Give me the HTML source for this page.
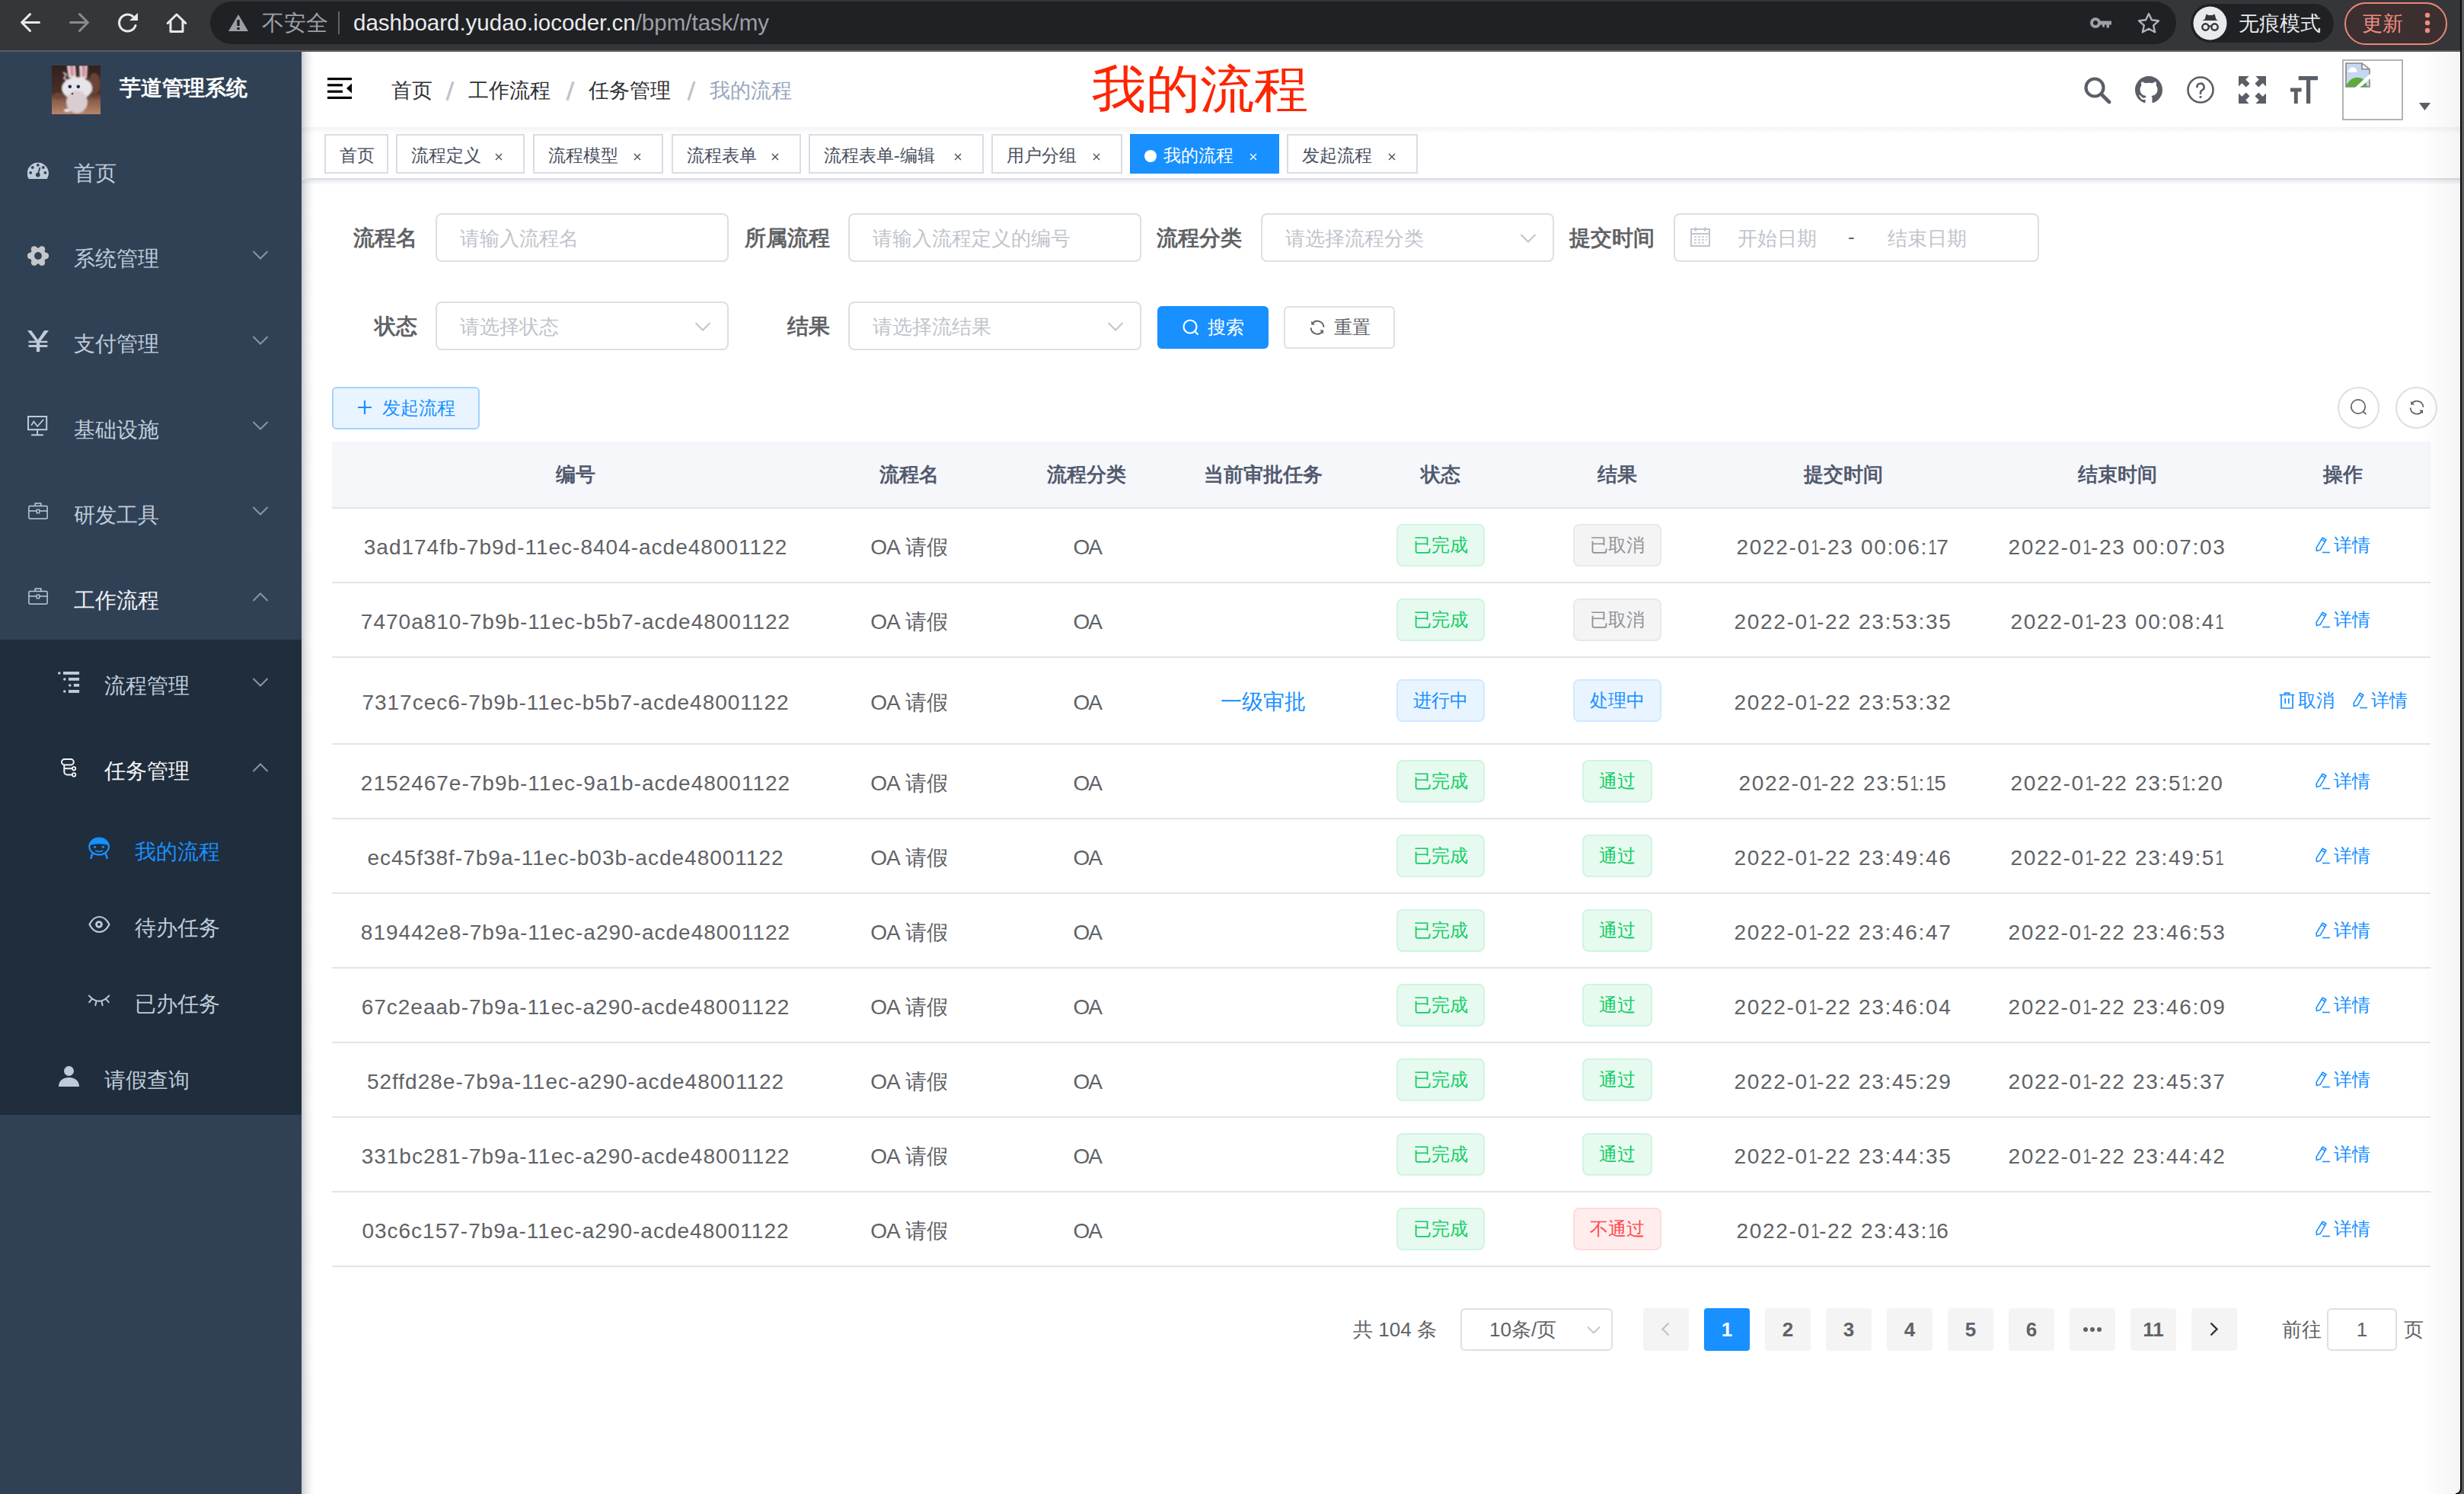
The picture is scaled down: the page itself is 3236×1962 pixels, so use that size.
<!DOCTYPE html>
<html><head><meta charset="utf-8">
<style>
*{box-sizing:border-box;margin:0;padding:0}
html,body{width:3236px;height:1962px;overflow:hidden;background:#fff}
body{font-family:"Liberation Sans",sans-serif;position:relative;color:#606266}
.a{position:absolute;white-space:nowrap}
svg{display:block}
/* chrome */
#chrome{left:0;top:0;width:3236px;height:66px;background:#35363a}
#chromeline{left:0;top:66px;width:3236px;height:2px;background:#5b5c60}
#omni{left:276px;top:2px;width:2582px;height:56px;border-radius:28px;background:#202124}
/* sidebar */
#side{left:0;top:68px;width:396px;height:1894px;background:#304156}
#subdark{left:0;top:840px;width:396px;height:624px;background:#1f2d3d}
.mi{font-size:28px;color:#bfcbd9;line-height:40px}
.mi.w{color:#f4f4f5}
.mi.act{color:#1890ff}
/* main */
#shadowL{left:396px;top:68px;width:17px;height:1894px;background:linear-gradient(to right,rgba(0,21,41,.22),rgba(0,21,41,.1) 35%,rgba(0,21,41,.03) 70%,rgba(0,21,41,0))}
.bc{font-size:28px;line-height:40px;color:#303133}
.sep{color:#c0c4cc;font-weight:bold;margin:0 19px 0 20px;font-size:31px}
.tag{top:176px;height:52px;border:2px solid #d8dce5;background:#fff;color:#495060;font-size:23px;line-height:52px;padding:0 0 0 18px}
.tag .x{position:absolute}
.lbl{font-size:28px;font-weight:bold;color:#606266;line-height:44px;text-align:right}
.inp{height:64px;border:2px solid #dcdfe6;border-radius:8px;background:#fff}
.ph{font-size:26px;color:#c0c4cc;line-height:44px}
.th{font-size:26px;font-weight:bold;color:#515a6e;line-height:40px;text-align:center}
.td{font-size:28px;color:#606266;line-height:40px;text-align:center;letter-spacing:1px}
.dt{letter-spacing:1.67px}.dt .o{font-weight:normal;display:inline-block;transform:scaleX(0.72);margin:0 -3.8px 0 -2.2px}
.rowline{left:436px;width:2756px;height:2px;background:#dfe6ec}
.stag{height:56px;border:2px solid;border-radius:8px;font-size:24px;line-height:52px;text-align:center}
.ok{background:#e7faf0;border-color:#d0f5e0;color:#13ce66}
.info{background:#f4f4f5;border-color:#e9e9eb;color:#909399}
.pri{background:#e8f4ff;border-color:#d1e9ff;color:#1890ff}
.dan{background:#ffeded;border-color:#ffdbdb;color:#ff4949}
.link{color:#1890ff;font-size:24px;line-height:40px}
.pg{top:1718px;width:60px;height:56px;background:#f4f4f5;border-radius:4px;font-size:26px;font-weight:bold;color:#606266;text-align:center;line-height:56px}
</style></head><body>

<!-- ============ CHROME BAR ============ -->
<div class="a" id="chrome"></div>
<div class="a" id="chromeline"></div>
<div class="a" id="omni"></div>
<svg class="a" style="left:24px;top:14px" width="32" height="32" viewBox="0 0 32 32"><path d="M27.5 15.5H5M15.5 4.6L4.6 15.5l10.9 11" fill="none" stroke="#e8eaed" stroke-width="3" stroke-linecap="round" stroke-linejoin="round"/></svg>
<svg class="a" style="left:88px;top:14px" width="32" height="32" viewBox="0 0 32 32"><path d="M4.5 15.5h22.5M16.5 4.6l10.9 10.9-10.9 11" fill="none" stroke="#8a8b8e" stroke-width="3" stroke-linecap="round" stroke-linejoin="round"/></svg>
<svg class="a" style="left:152px;top:14px" width="32" height="32" viewBox="0 0 32 32"><path d="M26 19.5A11 11 0 1 1 22.5 7.5" fill="none" stroke="#e8eaed" stroke-width="3" stroke-linecap="round"/><path d="M18 13L29 13 29 3z" fill="#e8eaed"/></svg>
<svg class="a" style="left:216px;top:14px" width="32" height="32" viewBox="0 0 32 32"><path d="M4.2 16.5L16 5l11.8 11.5M8 13.5v14h16v-14" fill="none" stroke="#e8eaed" stroke-width="3" stroke-linecap="round" stroke-linejoin="round"/></svg>
<svg class="a" style="left:299px;top:18px" width="28" height="24" viewBox="0 0 28 24"><path d="M14 1L27 23H1z" fill="#9aa0a6"/><rect x="12.3" y="8" width="3.4" height="8" fill="#202124"/><rect x="12.3" y="18" width="3.4" height="3" fill="#202124"/></svg>
<div class="a" style="left:344px;top:10px;font-size:29px;line-height:40px;color:#9aa0a6">不安全</div>
<div class="a" style="left:444px;top:15px;width:2px;height:30px;background:#5f6368"></div>
<div class="a" style="left:464px;top:10px;font-size:29.5px;line-height:40px;color:#e8eaed">dashboard.yudao.iocoder.cn<span style="color:#9aa0a6">/bpm/task/my</span></div>
<svg class="a" style="left:2744px;top:20px" width="30" height="20" viewBox="0 0 30 20"><circle cx="8" cy="10" r="7" fill="#9aa0a6"/><circle cx="8" cy="10" r="3" fill="#202124"/><path d="M13 7.5h16v5h-3v4h-3.5v-4h-2.5v3h-3v-3H13z" fill="#9aa0a6"/></svg>
<svg class="a" style="left:2806px;top:15px" width="32" height="32" viewBox="0 0 32 32"><path d="M16 3l3.9 8.3 9 1-6.7 6.1 1.9 8.9L16 22.7l-8.1 4.6 1.9-8.9-6.7-6.1 9-1z" fill="none" stroke="#b0b4b9" stroke-width="2.4" stroke-linejoin="round"/></svg>
<div class="a" style="left:2876px;top:4px;width:190px;height:53px;border-radius:27px;background:#202124;border:1px solid #3a3b3e"></div>
<svg class="a" style="left:2880px;top:8px" width="45" height="45" viewBox="0 0 45 45"><circle cx="22.5" cy="22.5" r="22" fill="#e8eaed"/><path d="M12 19h21l-2.5-1.5-2-7-3 1.5h-5l-3-1.5-2 7z" fill="#35363a"/><circle cx="16.5" cy="27.5" r="4.2" fill="none" stroke="#35363a" stroke-width="2.4"/><circle cx="28.5" cy="27.5" r="4.2" fill="none" stroke="#35363a" stroke-width="2.4"/><path d="M20.5 27q2-1.5 4 0" fill="none" stroke="#35363a" stroke-width="2"/></svg>
<div class="a" style="left:2940px;top:11px;font-size:27px;line-height:40px;color:#e8eaed">无痕模式</div>
<div class="a" style="left:3079px;top:3px;width:135px;height:56px;border-radius:28px;border:2.5px solid #ee8577;background:#3b2f30"></div>
<div class="a" style="left:3102px;top:11px;font-size:27px;line-height:40px;color:#f28b82">更新</div>
<svg class="a" style="left:3181px;top:15px" width="14" height="32" viewBox="0 0 14 32"><circle cx="7" cy="5" r="3.2" fill="#f28b82"/><circle cx="7" cy="15" r="3.2" fill="#f28b82"/><circle cx="7" cy="25" r="3.2" fill="#f28b82"/></svg>

<!-- ============ SIDEBAR ============ -->
<div class="a" id="side"></div>
<div class="a" id="subdark"></div>
<!-- logo -->
<svg class="a" style="left:68px;top:86px" width="64" height="64" viewBox="0 0 64 64">
<defs><linearGradient id="lg" x1="0" y1="0" x2="0" y2="1"><stop offset="0" stop-color="#33201d"/><stop offset="0.55" stop-color="#4a2e27"/><stop offset="0.72" stop-color="#8a5d4b"/><stop offset="1" stop-color="#b98568"/></linearGradient>
<filter id="bl"><feGaussianBlur stdDeviation="0.9"/></filter></defs>
<rect width="64" height="64" fill="url(#lg)"/>
<g filter="url(#bl)">
<ellipse cx="56" cy="24" rx="8" ry="14" fill="#6a4535"/>
<ellipse cx="8" cy="40" rx="5" ry="4" fill="#6b4a40"/>
<path d="M20 0h11l1 16h-10z" fill="#e9e4e6"/><path d="M23 0h6l.5 14h-5z" fill="#d88d9d"/>
<path d="M36 0h11l-1 17h-9z" fill="#e9e4e6"/><path d="M39 0h6l-.5 15h-5z" fill="#d88d9d"/>
<path d="M15 9l4 3-3 5 4 2-3 5" fill="none" stroke="#e8e8ea" stroke-width="1.6"/>
<ellipse cx="33" cy="30" rx="20" ry="15" fill="#e6e6ea"/>
<ellipse cx="33" cy="48" rx="14" ry="15" fill="#d9cdd2"/>
<ellipse cx="20" cy="59" rx="4" ry="2" fill="#eeeef0"/>
</g>
<circle cx="23.8" cy="27.8" r="2.3" fill="#22304a"/><circle cx="34.8" cy="27.8" r="2.3" fill="#22304a"/>
<ellipse cx="27" cy="37" rx="1.3" ry="1.6" fill="#7a4638"/>
</svg>
<div class="a" style="left:157px;top:96px;font-size:28px;line-height:40px;color:#fff;font-weight:bold">芋道管理系统</div>
<!-- menu text -->
<div class="a mi" style="left:97px;top:208px">首页</div>
<div class="a mi" style="left:97px;top:320px">系统管理</div>
<div class="a mi" style="left:97px;top:432px">支付管理</div>
<div class="a mi" style="left:97px;top:545px">基础设施</div>
<div class="a mi" style="left:97px;top:657px">研发工具</div>
<div class="a mi w" style="left:97px;top:769px">工作流程</div>
<div class="a mi" style="left:137px;top:881px">流程管理</div>
<div class="a mi w" style="left:137px;top:993px">任务管理</div>
<div class="a mi act" style="left:177px;top:1099px">我的流程</div>
<div class="a mi" style="left:177px;top:1199px">待办任务</div>
<div class="a mi" style="left:177px;top:1299px">已办任务</div>
<div class="a mi" style="left:137px;top:1399px">请假查询</div>
<!-- arrows -->
<svg class="a" style="left:331px;top:328px" width="22" height="14" viewBox="0 0 22 14"><path d="M1.5 2l9.5 9.5L20.5 2" fill="none" stroke="#909399" stroke-width="2"/></svg>
<svg class="a" style="left:331px;top:440px" width="22" height="14" viewBox="0 0 22 14"><path d="M1.5 2l9.5 9.5L20.5 2" fill="none" stroke="#909399" stroke-width="2"/></svg>
<svg class="a" style="left:331px;top:552px" width="22" height="14" viewBox="0 0 22 14"><path d="M1.5 2l9.5 9.5L20.5 2" fill="none" stroke="#909399" stroke-width="2"/></svg>
<svg class="a" style="left:331px;top:664px" width="22" height="14" viewBox="0 0 22 14"><path d="M1.5 2l9.5 9.5L20.5 2" fill="none" stroke="#909399" stroke-width="2"/></svg>
<svg class="a" style="left:331px;top:777px" width="22" height="14" viewBox="0 0 22 14"><path d="M1.5 12l9.5-9.5L20.5 12" fill="none" stroke="#909399" stroke-width="2"/></svg>
<svg class="a" style="left:331px;top:889px" width="22" height="14" viewBox="0 0 22 14"><path d="M1.5 2l9.5 9.5L20.5 2" fill="none" stroke="#909399" stroke-width="2"/></svg>
<svg class="a" style="left:331px;top:1001px" width="22" height="14" viewBox="0 0 22 14"><path d="M1.5 12l9.5-9.5L20.5 12" fill="none" stroke="#909399" stroke-width="2"/></svg>
<!-- icons -->
<svg class="a" style="left:36px;top:212px" width="28" height="25" viewBox="0 0 28 25"><path d="M1.8 23.1A14.1 14.1 0 1 1 25.8 23.1z" fill="#bfcbd9"/><g fill="#304156"><circle cx="4.2" cy="14.8" r="1.9"/><circle cx="6.8" cy="7.9" r="1.9"/><circle cx="13.8" cy="4.8" r="1.9"/><circle cx="20.8" cy="7.9" r="1.9"/><circle cx="23.4" cy="14.8" r="1.9"/><circle cx="13.8" cy="17.6" r="2.9"/></g><path d="M13.8 17L16.3 8.6" stroke="#304156" stroke-width="1.9" stroke-linecap="round"/></svg>
<svg class="a" style="left:36px;top:322px" width="28" height="28" viewBox="0 0 28 28"><g fill="#c5c7cb"><circle cx="14" cy="14" r="10.6"/><circle cx="24.00" cy="14.00" r="4.2"/><circle cx="19.00" cy="22.66" r="4.2"/><circle cx="9.00" cy="22.66" r="4.2"/><circle cx="4.00" cy="14.00" r="4.2"/><circle cx="9.00" cy="5.34" r="4.2"/><circle cx="19.00" cy="5.34" r="4.2"/></g><circle cx="14" cy="14" r="4.9" fill="#304156"/></svg>
<svg class="a" style="left:28px;top:425px" width="44" height="45" viewBox="0 0 44 45"><path d="M8 9H13L21.9 21.2L30.1 9H36L24.2 24.5V37H19.9V24.5Z" fill="#bfcbd9"/><rect x="9.5" y="22.7" width="24.8" height="2.4" fill="#bfcbd9"/><rect x="9.5" y="28" width="24.8" height="2.9" fill="#bfcbd9"/></svg>
<svg class="a" style="left:28px;top:538px" width="44" height="42" viewBox="0 0 44 42"><rect x="9" y="9" width="24.2" height="17.2" fill="none" stroke="#bfcbd9" stroke-width="2"/><path d="M21.1 26.2V33.3M13.1 33.3H29" fill="none" stroke="#bfcbd9" stroke-width="1.9"/><path d="M13.5 20L16.4 15.6L21.2 22L28.7 13.4" fill="none" stroke="#bfcbd9" stroke-width="1.7" stroke-linecap="round"/></svg>
<svg class="a" style="left:37px;top:660px" width="26" height="23" viewBox="0 0 26 23"><rect x="0.9" y="4.6" width="24.2" height="16.6" rx="1.5" fill="none" stroke="#bfcbd9" stroke-width="1.5"/><path d="M9.2 4.6V1h7.6v3.6M0.9 11h24.2" fill="none" stroke="#bfcbd9" stroke-width="1.5"/><rect x="11.3" y="9.2" width="3.4" height="4.6" fill="#304156" stroke="#bfcbd9" stroke-width="1.3"/></svg>
<svg class="a" style="left:37px;top:772px" width="26" height="23" viewBox="0 0 26 23"><rect x="0.9" y="4.6" width="24.2" height="16.6" rx="1.5" fill="none" stroke="#bfcbd9" stroke-width="1.5"/><path d="M9.2 4.6V1h7.6v3.6M0.9 11h24.2" fill="none" stroke="#bfcbd9" stroke-width="1.5"/><rect x="11.3" y="9.2" width="3.4" height="4.6" fill="#304156" stroke="#bfcbd9" stroke-width="1.3"/></svg>
<svg class="a" style="left:76px;top:882px" width="29" height="29" viewBox="0 0 29 29"><g fill="#bfcbd9"><circle cx="1.8" cy="2" r="1.8"/><rect x="7" y="0" width="21.1" height="3.9"/><circle cx="8.8" cy="10" r="1.8"/><rect x="14" y="8" width="14.1" height="3.8"/><circle cx="15.8" cy="18" r="1.8"/><rect x="20.9" y="16" width="7.2" height="3.8"/><circle cx="8.8" cy="26" r="1.8"/><rect x="14" y="24" width="14.1" height="3.9"/></g></svg>
<svg class="a" style="left:78px;top:994px" width="24" height="27" viewBox="0 0 24 27"><rect x="3" y="3" width="15.8" height="7.4" rx="3.7" fill="none" stroke="#f4f4f5" stroke-width="2"/><path d="M6.3 10.5V19.5a4 4 0 0 0 4 4H16.9M6.3 15.3H16.9" fill="none" stroke="#f4f4f5" stroke-width="2"/><circle cx="19.1" cy="15.3" r="2.2" fill="#1f2d3d" stroke="#f4f4f5" stroke-width="1.8"/><circle cx="19.1" cy="23.4" r="2.2" fill="#1f2d3d" stroke="#f4f4f5" stroke-width="1.8"/></svg>
<svg class="a" style="left:110px;top:1095px" width="40" height="40" viewBox="0 0 40 40"><ellipse cx="20.1" cy="16.8" rx="12.8" ry="10.6" fill="none" stroke="#1890ff" stroke-width="2.3"/><path d="M7.3 15A12.8 10.6 0 0 1 32.9 15Q20 11.4 7.3 15z" fill="#1890ff"/><path d="M7.6 13.5Q9 6.2 20.1 6.2T32.6 13.5Q20 11 7.6 13.5z" fill="#1890ff"/><ellipse cx="14.6" cy="17.4" rx="1.7" ry="1.3" fill="#1890ff"/><ellipse cx="25.4" cy="17.4" rx="1.7" ry="1.3" fill="#1890ff"/><path d="M15.8 22.2Q20.1 24.6 24.4 22.2" fill="none" stroke="#1890ff" stroke-width="1.8" stroke-linecap="round"/><path d="M11.8 25.8Q9.8 28.5 9.4 32.8M28.3 25.8Q30.3 28.5 30.8 32.8" fill="none" stroke="#1890ff" stroke-width="2.6"/></svg>
<svg class="a" style="left:116px;top:1202px" width="29" height="24" viewBox="0 0 29 24"><path d="M1.5 12C5 5 10 2 14.5 2S24 5 27.5 12C24 19 19 22 14.5 22S5 19 1.5 12z" fill="none" stroke="#bfcbd9" stroke-width="2.2"/><circle cx="14" cy="12" r="3.4" fill="none" stroke="#bfcbd9" stroke-width="2.9"/></svg>
<svg class="a" style="left:110px;top:1295px" width="40" height="40" viewBox="0 0 40 40"><path d="M7 12.6Q19.9 27 33.2 12.6M10.4 17.4L7.2 21.2M29.4 17.4L32.7 21.2M16.3 20.6L15.3 25.2M23.6 20.6L24.6 25.2" fill="none" stroke="#bfcbd9" stroke-width="2" stroke-linecap="round"/></svg>
<svg class="a" style="left:76px;top:1399px" width="29" height="30" viewBox="0 0 29 30"><circle cx="14.5" cy="7.5" r="6.5" fill="#bfcbd9"/><path d="M1 28c0-8 6-12 13.5-12S28 20 28 28z" fill="#bfcbd9"/></svg>

<!-- ============ MAIN ============ -->
<div class="a" id="shadowL"></div>
<!-- navbar -->

<svg class="a" style="left:430px;top:102px" width="32" height="28" viewBox="0 0 32 28"><rect x="0" y="0" width="32" height="3.2" fill="#000"/><rect x="0" y="8.2" width="20" height="3.2" fill="#000"/><rect x="0" y="16.6" width="20" height="3.2" fill="#000"/><rect x="0" y="24.8" width="32" height="3.2" fill="#000"/><path d="M32 7.5v13l-7-6.5z" fill="#000"/></svg>
<div class="a bc" style="left:514px;top:99px;font-size:27px">首页</div><svg class="a" style="left:585px;top:106px" width="12" height="27" viewBox="0 0 12 27"><path d="M10 1.2L2 25.8" stroke="#c0c4cc" stroke-width="3.3" stroke-linecap="butt"/></svg><div class="a bc" style="left:615px;top:99px;font-size:27px">工作流程</div><svg class="a" style="left:743px;top:106px" width="12" height="27" viewBox="0 0 12 27"><path d="M10 1.2L2 25.8" stroke="#c0c4cc" stroke-width="3.3" stroke-linecap="butt"/></svg><div class="a bc" style="left:773px;top:99px;font-size:27px">任务管理</div><svg class="a" style="left:902px;top:106px" width="12" height="27" viewBox="0 0 12 27"><path d="M10 1.2L2 25.8" stroke="#c0c4cc" stroke-width="3.3" stroke-linecap="butt"/></svg><div class="a bc" style="left:932px;top:99px;font-size:27px;color:#97a8be">我的流程</div>
<div class="a" style="left:1434px;top:67px;font-size:71px;line-height:100px;color:#fe2500;transform:scaleY(0.94);transform-origin:0 50%">我的流程</div>
<!-- right icons -->
<svg class="a" style="left:2736px;top:100px" width="37" height="37" viewBox="0 0 37 37"><circle cx="15" cy="15" r="11.5" fill="none" stroke="#5a5e66" stroke-width="4.2"/><path d="M23.5 23.5L34 34" stroke="#5a5e66" stroke-width="4.6" stroke-linecap="round"/></svg>
<svg class="a" style="left:2804px;top:100px" width="36" height="36" viewBox="0 0 16 16"><path fill="#5a5e66" d="M8 0C3.58 0 0 3.58 0 8c0 3.54 2.29 6.53 5.47 7.59.4.07.55-.17.55-.38 0-.19-.01-.82-.01-1.49-2.01.37-2.53-.49-2.69-.94-.09-.23-.48-.94-.82-1.13-.28-.15-.68-.52-.01-.53.63-.01 1.08.58 1.23.82.72 1.21 1.87.87 2.33.66.07-.52.28-.87.51-1.07-1.78-.2-3.64-.89-3.64-3.95 0-.87.31-1.59.82-2.15-.08-.2-.36-1.02.08-2.12 0 0 .67-.21 2.2.82.64-.18 1.32-.27 2-.27.68 0 1.36.09 2 .27 1.53-1.04 2.2-.82 2.2-.82.44 1.1.16 1.92.08 2.12.51.56.82 1.27.82 2.15 0 3.07-1.87 3.75-3.65 3.95.29.25.54.73.54 1.48 0 1.07-.01 1.93-.01 2.2 0 .21.15.46.55.38A8.013 8.013 0 0016 8c0-4.42-3.58-8-8-8z"/></svg>
<svg class="a" style="left:2872px;top:100px" width="36" height="36" viewBox="0 0 36 36"><circle cx="18" cy="18" r="16.5" fill="none" stroke="#5a5e66" stroke-width="2.6"/><path d="M13.4 14.2a4.6 4.6 0 1 1 6.7 4.1c-1.4.8-2.1 1.5-2.1 3v1.4" fill="none" stroke="#5a5e66" stroke-width="2.6" stroke-linecap="round"/><circle cx="18" cy="27.3" r="1.6" fill="#5a5e66"/></svg>
<svg class="a" style="left:2940px;top:100px" width="36" height="36" viewBox="0 0 37 37"><path fill="#5a5e66" d="M0 0h14l-4.5 4.5 5.5 5.5-5 5-5.5-5.5L0 14zM37 0v14l-4.5-4.5-5.5 5.5-5-5 5.5-5.5L23 0zM0 37V23l4.5 4.5 5.5-5.5 5 5-5.5 5.5L14 37zM37 37H23l4.5-4.5-5.5-5.5 5-5 5.5 5.5L37 23z"/></svg>
<svg class="a" style="left:3008px;top:100px" width="36" height="36" viewBox="0 0 37 37"><path fill="#5a5e66" d="M11 0h26v5.5H27V37h-5.5V5.5H11zM0 16h15v5H10v16H5V21H0z"/></svg>
<div class="a" style="left:3076px;top:78px;width:80px;height:80px;border:2px solid #b4b4b4;background:#fff"></div>
<svg class="a" style="left:3080px;top:82px" width="33" height="33" viewBox="0 0 33 33"><path d="M1 1H22L32 9V32H1z" fill="#c5d7f2"/><path d="M22 1L32 9H22z" fill="#fff"/><path d="M3.2 12.8C4.5 9 6.5 6.2 10 6.2S14.8 9 15.8 12.8z" fill="#fff"/><path d="M1 32C3 26 8 20 15.5 19.8S27 24 29 32z" fill="#5bab3d"/><path d="M32 15.6L13.4 32.6H20.2L32 22z" fill="#fff"/><path d="M32 15.6V9L22 1H1V32H13.4M20.2 32H32V22" fill="none" stroke="#868686" stroke-width="1.6"/><path d="M22 1V8.8H32" fill="none" stroke="#868686" stroke-width="1.6"/></svg>
<svg class="a" style="left:3177px;top:135px" width="15" height="10" viewBox="0 0 15 10"><path d="M0 0h15L7.5 10z" fill="#5a5e66"/></svg>
<!-- tags view -->
<div class="a" style="left:396px;top:167px;width:2840px;height:9px;background:linear-gradient(rgba(0,21,41,.05),rgba(0,21,41,0))"></div>
<div class="a" style="left:396px;top:234px;width:2840px;height:2px;background:#d8dce5"></div>
<div class="a" style="left:396px;top:236px;width:2840px;height:7px;background:linear-gradient(rgba(0,21,41,.09),rgba(0,21,41,0))"></div>
<div class="a tag" style="left:426px;width:84px">首页</div>
<div class="a tag" style="left:520px;width:169px">流程定义<svg class="x" style="left:128px;top:23px" width="10" height="10" viewBox="0 0 10 10"><path d="M1 1l8 8M9 1l-8 8" stroke="currentColor" stroke-width="1.4"/></svg></div>
<div class="a tag" style="left:700px;width:171px">流程模型<svg class="x" style="left:130px;top:23px" width="10" height="10" viewBox="0 0 10 10"><path d="M1 1l8 8M9 1l-8 8" stroke="currentColor" stroke-width="1.4"/></svg></div>
<div class="a tag" style="left:882px;width:170px">流程表单<svg class="x" style="left:129px;top:23px" width="10" height="10" viewBox="0 0 10 10"><path d="M1 1l8 8M9 1l-8 8" stroke="currentColor" stroke-width="1.4"/></svg></div>
<div class="a tag" style="left:1062px;width:230px">流程表单-编辑<svg class="x" style="left:189px;top:23px" width="10" height="10" viewBox="0 0 10 10"><path d="M1 1l8 8M9 1l-8 8" stroke="currentColor" stroke-width="1.4"/></svg></div>
<div class="a tag" style="left:1302px;width:172px">用户分组<svg class="x" style="left:131px;top:23px" width="10" height="10" viewBox="0 0 10 10"><path d="M1 1l8 8M9 1l-8 8" stroke="currentColor" stroke-width="1.4"/></svg></div>
<div class="a tag" style="left:1484px;width:196px;background:#1890ff;border-color:#1890ff;color:#fff;padding-left:17px"><span style="display:inline-block;width:16px;height:16px;border-radius:50%;background:#fff;margin-right:9px;vertical-align:-1px"></span>我的流程<svg class="x" style="left:155px;top:23px" width="10" height="10" viewBox="0 0 10 10"><path d="M1 1l8 8M9 1l-8 8" stroke="currentColor" stroke-width="1.4"/></svg></div>
<div class="a tag" style="left:1690px;width:172px">发起流程<svg class="x" style="left:131px;top:23px" width="10" height="10" viewBox="0 0 10 10"><path d="M1 1l8 8M9 1l-8 8" stroke="currentColor" stroke-width="1.4"/></svg></div>


<!-- ============ FORM ============ -->
<div class="a lbl" style="left:436px;top:291px;width:112px">流程名</div>
<div class="a inp" style="left:572px;top:280px;width:385px"></div>
<div class="a ph" style="left:604px;top:291px">请输入流程名</div>
<div class="a lbl" style="left:977px;top:291px;width:113px">所属流程</div>
<div class="a inp" style="left:1114px;top:280px;width:385px"></div>
<div class="a ph" style="left:1146px;top:291px">请输入流程定义的编号</div>
<div class="a lbl" style="left:1518px;top:291px;width:113px">流程分类</div>
<div class="a inp" style="left:1656px;top:280px;width:385px"></div>
<div class="a ph" style="left:1688px;top:291px">请选择流程分类</div>
<svg class="a" style="left:1996px;top:306px" width="22" height="14" viewBox="0 0 22 14"><path d="M1.5 2l9.5 9.5L20.5 2" fill="none" stroke="#c0c4cc" stroke-width="2"/></svg>
<div class="a lbl" style="left:2061px;top:291px;width:112px">提交时间</div>
<div class="a inp" style="left:2198px;top:280px;width:480px"></div>
<svg class="a" style="left:2220px;top:298px" width="26" height="26" viewBox="0 0 26 26"><rect x="1" y="3" width="24" height="22" fill="none" stroke="#c0c4cc" stroke-width="2"/><path d="M1 9h24M7 0.5v5M19 0.5v5" stroke="#c0c4cc" stroke-width="2"/><path d="M5 13h3M10 13h3M15 13h3M20 13h2M5 17h3M10 17h3M15 17h3M20 17h2M5 21h3M10 21h3M15 21h3" stroke="#c0c4cc" stroke-width="1.6"/></svg>
<div class="a ph" style="left:2282px;top:291px">开始日期</div>
<div class="a" style="left:2427px;top:291px;font-size:26px;line-height:40px;color:#606266">-</div>
<div class="a ph" style="left:2479px;top:291px">结束日期</div>

<div class="a lbl" style="left:436px;top:407px;width:112px">状态</div>
<div class="a inp" style="left:572px;top:396px;width:385px"></div>
<div class="a ph" style="left:604px;top:407px">请选择状态</div>
<svg class="a" style="left:912px;top:422px" width="22" height="14" viewBox="0 0 22 14"><path d="M1.5 2l9.5 9.5L20.5 2" fill="none" stroke="#c0c4cc" stroke-width="2"/></svg>
<div class="a lbl" style="left:977px;top:407px;width:113px">结果</div>
<div class="a inp" style="left:1114px;top:396px;width:385px"></div>
<div class="a ph" style="left:1146px;top:407px">请选择流结果</div>
<svg class="a" style="left:1454px;top:422px" width="22" height="14" viewBox="0 0 22 14"><path d="M1.5 2l9.5 9.5L20.5 2" fill="none" stroke="#c0c4cc" stroke-width="2"/></svg>
<div class="a" style="left:1520px;top:402px;width:146px;height:56px;border-radius:6px;background:#1890ff"></div>
<svg class="a" style="left:1552px;top:418px" width="24" height="24" viewBox="0 0 24 24"><circle cx="11" cy="11" r="8.5" fill="none" stroke="#fff" stroke-width="2.2"/><path d="M17.5 17.5l4 4" stroke="#fff" stroke-width="2.2"/></svg>
<div class="a" style="left:1586px;top:410px;font-size:24px;line-height:40px;color:#fff">搜索</div>
<div class="a" style="left:1686px;top:402px;width:146px;height:56px;border-radius:6px;background:#fff;border:2px solid #dcdfe6"></div>
<svg class="a" style="left:1718px;top:418px" width="24" height="24" viewBox="0 0 24 24"><path d="M20.5 11.8A8.5 8.5 0 0 0 5.6 6.6" fill="none" stroke="#606266" stroke-width="1.9"/><path d="M4.2 3.6v4.8h4.8z" fill="#606266"/><path d="M3.6 12.4A8.5 8.5 0 0 0 18.6 17.6" fill="none" stroke="#606266" stroke-width="1.9"/><path d="M20 20.4v-4.8h-4.8z" fill="#606266"/></svg>
<div class="a" style="left:1752px;top:410px;font-size:24px;line-height:40px;color:#606266">重置</div>

<div class="a" style="left:436px;top:508px;width:194px;height:56px;border-radius:6px;background:#e8f4ff;border:2px solid #a3d3ff"></div>
<svg class="a" style="left:469px;top:525px" width="20" height="20" viewBox="0 0 20 20"><path d="M10 1v18M1 10h18" stroke="#1890ff" stroke-width="2.2"/></svg>
<div class="a" style="left:502px;top:516px;font-size:24px;line-height:40px;color:#1890ff">发起流程</div>
<div class="a" style="left:3070px;top:508px;width:55px;height:55px;border-radius:50%;border:2px solid #dcdfe6;background:#fff"></div>
<svg class="a" style="left:3085px;top:522px" width="26" height="26" viewBox="0 0 26 26"><circle cx="12" cy="12" r="9.2" fill="none" stroke="#606266" stroke-width="1.7"/><path d="M18.6 18.4l3.8 3.8" stroke="#606266" stroke-width="1.7"/></svg>
<div class="a" style="left:3146px;top:508px;width:55px;height:55px;border-radius:50%;border:2px solid #dcdfe6;background:#fff"></div>
<svg class="a" style="left:3162px;top:523px" width="24" height="24" viewBox="0 0 24 24"><path d="M20.5 11.8A8.5 8.5 0 0 0 5.6 6.6" fill="none" stroke="#606266" stroke-width="1.7"/><path d="M4.2 3.6v4.8h4.8z" fill="#606266"/><path d="M3.6 12.4A8.5 8.5 0 0 0 18.6 17.6" fill="none" stroke="#606266" stroke-width="1.7"/><path d="M20 20.4v-4.8h-4.8z" fill="#606266"/></svg>

<!-- ============ TABLE ============ -->
<div class="a" style="left:436px;top:580px;width:2756px;height:86px;background:#f5f7fa"></div>
<div class="a th" style="left:436px;top:603px;width:640px">编号</div>
<div class="a th" style="left:1078px;top:603px;width:232.5px">流程名</div>
<div class="a th" style="left:1310.5px;top:603px;width:232.5px">流程分类</div>
<div class="a th" style="left:1543px;top:603px;width:232.5px">当前审批任务</div>
<div class="a th" style="left:1775.5px;top:603px;width:232.5px">状态</div>
<div class="a th" style="left:2008px;top:603px;width:232.5px">结果</div>
<div class="a th" style="left:2240.5px;top:603px;width:360.0px">提交时间</div>
<div class="a th" style="left:2600.5px;top:603px;width:360.0px">结束时间</div>
<div class="a th" style="left:2960.5px;top:603px;width:233.5px">操作</div>
<div class="a rowline" style="top:666px"></div>
<div class="a rowline" style="top:764px"></div>
<div class="a rowline" style="top:862px"></div>
<div class="a rowline" style="top:976px"></div>
<div class="a rowline" style="top:1074px"></div>
<div class="a rowline" style="top:1172px"></div>
<div class="a rowline" style="top:1270px"></div>
<div class="a rowline" style="top:1368px"></div>
<div class="a rowline" style="top:1466px"></div>
<div class="a rowline" style="top:1564px"></div>
<div class="a rowline" style="top:1662px"></div>
<div class="a td" style="left:436px;top:698.5px;width:640px">3ad174fb-7b9d-11ec-8404-acde48001122</div>
<div class="a td" style="left:1078px;top:698.5px;width:232.5px;letter-spacing:0"><span style="letter-spacing:-1px">OA</span> 请假</div>
<div class="a td" style="left:1310.5px;top:698.5px;width:232.5px;letter-spacing:-2px;text-indent:2px">OA</div>
<div class="a td" style="left:2240.5px;top:698.5px;width:360.0px"><span class="dt">2022-0<b class="o">1</b>-23 00:06:<b class="o">1</b>7</span></div>
<div class="a td" style="left:2600.5px;top:698.5px;width:360.0px"><span class="dt">2022-0<b class="o">1</b>-23 00:07:03</span></div>
<div class="a stag ok" style="left:1833.8px;top:688.0px;width:116px">已完成</div>
<div class="a stag info" style="left:2066.2px;top:688.0px;width:116px">已取消</div>
<div class="a link" style="left:2960.5px;top:696.0px;width:233.5px;text-align:center"><svg width="20" height="22" viewBox="0 0 20 22" style="display:inline-block;vertical-align:-3px;margin-right:4px"><path d="M9.3 1.2l4.6 2.6-7.8 13.5-4.6 1.3-.4-4.2z" fill="none" stroke="#1890ff" stroke-width="1.6" stroke-linejoin="round"/><path d="M8 3.6l4.6 2.6" stroke="#1890ff" stroke-width="1.6"/><path d="M9 20.5h10" stroke="#1890ff" stroke-width="1.6"/></svg>详情</div>
<div class="a td" style="left:436px;top:796.5px;width:640px">7470a810-7b9b-11ec-b5b7-acde48001122</div>
<div class="a td" style="left:1078px;top:796.5px;width:232.5px;letter-spacing:0"><span style="letter-spacing:-1px">OA</span> 请假</div>
<div class="a td" style="left:1310.5px;top:796.5px;width:232.5px;letter-spacing:-2px;text-indent:2px">OA</div>
<div class="a td" style="left:2240.5px;top:796.5px;width:360.0px"><span class="dt">2022-0<b class="o">1</b>-22 23:53:35</span></div>
<div class="a td" style="left:2600.5px;top:796.5px;width:360.0px"><span class="dt">2022-0<b class="o">1</b>-23 00:08:4<b class="o">1</b></span></div>
<div class="a stag ok" style="left:1833.8px;top:786.0px;width:116px">已完成</div>
<div class="a stag info" style="left:2066.2px;top:786.0px;width:116px">已取消</div>
<div class="a link" style="left:2960.5px;top:794.0px;width:233.5px;text-align:center"><svg width="20" height="22" viewBox="0 0 20 22" style="display:inline-block;vertical-align:-3px;margin-right:4px"><path d="M9.3 1.2l4.6 2.6-7.8 13.5-4.6 1.3-.4-4.2z" fill="none" stroke="#1890ff" stroke-width="1.6" stroke-linejoin="round"/><path d="M8 3.6l4.6 2.6" stroke="#1890ff" stroke-width="1.6"/><path d="M9 20.5h10" stroke="#1890ff" stroke-width="1.6"/></svg>详情</div>
<div class="a td" style="left:436px;top:902.5px;width:640px">7317cec6-7b9b-11ec-b5b7-acde48001122</div>
<div class="a td" style="left:1078px;top:902.5px;width:232.5px;letter-spacing:0"><span style="letter-spacing:-1px">OA</span> 请假</div>
<div class="a td" style="left:1310.5px;top:902.5px;width:232.5px;letter-spacing:-2px;text-indent:2px">OA</div>
<div class="a td" style="left:2240.5px;top:902.5px;width:360.0px"><span class="dt">2022-0<b class="o">1</b>-22 23:53:32</span></div>
<div class="a td" style="left:1543px;top:901.5px;width:232.5px;color:#1890ff;letter-spacing:0">一级审批</div>
<div class="a stag pri" style="left:1833.8px;top:892.0px;width:116px">进行中</div>
<div class="a stag pri" style="left:2066.2px;top:892.0px;width:116px">处理中</div>
<div class="a link" style="left:2960.5px;top:900.0px;width:233.5px;text-align:center"><svg width="21" height="22" viewBox="0 0 21 22" style="display:inline-block;vertical-align:-3px;margin-right:4px"><path d="M0.5 3.5h20M7.5 3.5V1.2h6v2.3" fill="none" stroke="#1890ff" stroke-width="1.7"/><path d="M3 3.5v17.5h15V3.5M8.2 8v7M12.8 8v7" fill="none" stroke="#1890ff" stroke-width="1.7"/></svg>取消<span style="display:inline-block;width:24px"></span><svg width="20" height="22" viewBox="0 0 20 22" style="display:inline-block;vertical-align:-3px;margin-right:4px"><path d="M9.3 1.2l4.6 2.6-7.8 13.5-4.6 1.3-.4-4.2z" fill="none" stroke="#1890ff" stroke-width="1.6" stroke-linejoin="round"/><path d="M8 3.6l4.6 2.6" stroke="#1890ff" stroke-width="1.6"/><path d="M9 20.5h10" stroke="#1890ff" stroke-width="1.6"/></svg>详情</div>
<div class="a td" style="left:436px;top:1008.5px;width:640px">2152467e-7b9b-11ec-9a1b-acde48001122</div>
<div class="a td" style="left:1078px;top:1008.5px;width:232.5px;letter-spacing:0"><span style="letter-spacing:-1px">OA</span> 请假</div>
<div class="a td" style="left:1310.5px;top:1008.5px;width:232.5px;letter-spacing:-2px;text-indent:2px">OA</div>
<div class="a td" style="left:2240.5px;top:1008.5px;width:360.0px"><span class="dt">2022-0<b class="o">1</b>-22 23:5<b class="o">1</b>:<b class="o">1</b>5</span></div>
<div class="a td" style="left:2600.5px;top:1008.5px;width:360.0px"><span class="dt">2022-0<b class="o">1</b>-22 23:5<b class="o">1</b>:20</span></div>
<div class="a stag ok" style="left:1833.8px;top:998.0px;width:116px">已完成</div>
<div class="a stag ok" style="left:2078.2px;top:998.0px;width:92px">通过</div>
<div class="a link" style="left:2960.5px;top:1006.0px;width:233.5px;text-align:center"><svg width="20" height="22" viewBox="0 0 20 22" style="display:inline-block;vertical-align:-3px;margin-right:4px"><path d="M9.3 1.2l4.6 2.6-7.8 13.5-4.6 1.3-.4-4.2z" fill="none" stroke="#1890ff" stroke-width="1.6" stroke-linejoin="round"/><path d="M8 3.6l4.6 2.6" stroke="#1890ff" stroke-width="1.6"/><path d="M9 20.5h10" stroke="#1890ff" stroke-width="1.6"/></svg>详情</div>
<div class="a td" style="left:436px;top:1106.5px;width:640px">ec45f38f-7b9a-11ec-b03b-acde48001122</div>
<div class="a td" style="left:1078px;top:1106.5px;width:232.5px;letter-spacing:0"><span style="letter-spacing:-1px">OA</span> 请假</div>
<div class="a td" style="left:1310.5px;top:1106.5px;width:232.5px;letter-spacing:-2px;text-indent:2px">OA</div>
<div class="a td" style="left:2240.5px;top:1106.5px;width:360.0px"><span class="dt">2022-0<b class="o">1</b>-22 23:49:46</span></div>
<div class="a td" style="left:2600.5px;top:1106.5px;width:360.0px"><span class="dt">2022-0<b class="o">1</b>-22 23:49:5<b class="o">1</b></span></div>
<div class="a stag ok" style="left:1833.8px;top:1096.0px;width:116px">已完成</div>
<div class="a stag ok" style="left:2078.2px;top:1096.0px;width:92px">通过</div>
<div class="a link" style="left:2960.5px;top:1104.0px;width:233.5px;text-align:center"><svg width="20" height="22" viewBox="0 0 20 22" style="display:inline-block;vertical-align:-3px;margin-right:4px"><path d="M9.3 1.2l4.6 2.6-7.8 13.5-4.6 1.3-.4-4.2z" fill="none" stroke="#1890ff" stroke-width="1.6" stroke-linejoin="round"/><path d="M8 3.6l4.6 2.6" stroke="#1890ff" stroke-width="1.6"/><path d="M9 20.5h10" stroke="#1890ff" stroke-width="1.6"/></svg>详情</div>
<div class="a td" style="left:436px;top:1204.5px;width:640px">819442e8-7b9a-11ec-a290-acde48001122</div>
<div class="a td" style="left:1078px;top:1204.5px;width:232.5px;letter-spacing:0"><span style="letter-spacing:-1px">OA</span> 请假</div>
<div class="a td" style="left:1310.5px;top:1204.5px;width:232.5px;letter-spacing:-2px;text-indent:2px">OA</div>
<div class="a td" style="left:2240.5px;top:1204.5px;width:360.0px"><span class="dt">2022-0<b class="o">1</b>-22 23:46:47</span></div>
<div class="a td" style="left:2600.5px;top:1204.5px;width:360.0px"><span class="dt">2022-0<b class="o">1</b>-22 23:46:53</span></div>
<div class="a stag ok" style="left:1833.8px;top:1194.0px;width:116px">已完成</div>
<div class="a stag ok" style="left:2078.2px;top:1194.0px;width:92px">通过</div>
<div class="a link" style="left:2960.5px;top:1202.0px;width:233.5px;text-align:center"><svg width="20" height="22" viewBox="0 0 20 22" style="display:inline-block;vertical-align:-3px;margin-right:4px"><path d="M9.3 1.2l4.6 2.6-7.8 13.5-4.6 1.3-.4-4.2z" fill="none" stroke="#1890ff" stroke-width="1.6" stroke-linejoin="round"/><path d="M8 3.6l4.6 2.6" stroke="#1890ff" stroke-width="1.6"/><path d="M9 20.5h10" stroke="#1890ff" stroke-width="1.6"/></svg>详情</div>
<div class="a td" style="left:436px;top:1302.5px;width:640px">67c2eaab-7b9a-11ec-a290-acde48001122</div>
<div class="a td" style="left:1078px;top:1302.5px;width:232.5px;letter-spacing:0"><span style="letter-spacing:-1px">OA</span> 请假</div>
<div class="a td" style="left:1310.5px;top:1302.5px;width:232.5px;letter-spacing:-2px;text-indent:2px">OA</div>
<div class="a td" style="left:2240.5px;top:1302.5px;width:360.0px"><span class="dt">2022-0<b class="o">1</b>-22 23:46:04</span></div>
<div class="a td" style="left:2600.5px;top:1302.5px;width:360.0px"><span class="dt">2022-0<b class="o">1</b>-22 23:46:09</span></div>
<div class="a stag ok" style="left:1833.8px;top:1292.0px;width:116px">已完成</div>
<div class="a stag ok" style="left:2078.2px;top:1292.0px;width:92px">通过</div>
<div class="a link" style="left:2960.5px;top:1300.0px;width:233.5px;text-align:center"><svg width="20" height="22" viewBox="0 0 20 22" style="display:inline-block;vertical-align:-3px;margin-right:4px"><path d="M9.3 1.2l4.6 2.6-7.8 13.5-4.6 1.3-.4-4.2z" fill="none" stroke="#1890ff" stroke-width="1.6" stroke-linejoin="round"/><path d="M8 3.6l4.6 2.6" stroke="#1890ff" stroke-width="1.6"/><path d="M9 20.5h10" stroke="#1890ff" stroke-width="1.6"/></svg>详情</div>
<div class="a td" style="left:436px;top:1400.5px;width:640px">52ffd28e-7b9a-11ec-a290-acde48001122</div>
<div class="a td" style="left:1078px;top:1400.5px;width:232.5px;letter-spacing:0"><span style="letter-spacing:-1px">OA</span> 请假</div>
<div class="a td" style="left:1310.5px;top:1400.5px;width:232.5px;letter-spacing:-2px;text-indent:2px">OA</div>
<div class="a td" style="left:2240.5px;top:1400.5px;width:360.0px"><span class="dt">2022-0<b class="o">1</b>-22 23:45:29</span></div>
<div class="a td" style="left:2600.5px;top:1400.5px;width:360.0px"><span class="dt">2022-0<b class="o">1</b>-22 23:45:37</span></div>
<div class="a stag ok" style="left:1833.8px;top:1390.0px;width:116px">已完成</div>
<div class="a stag ok" style="left:2078.2px;top:1390.0px;width:92px">通过</div>
<div class="a link" style="left:2960.5px;top:1398.0px;width:233.5px;text-align:center"><svg width="20" height="22" viewBox="0 0 20 22" style="display:inline-block;vertical-align:-3px;margin-right:4px"><path d="M9.3 1.2l4.6 2.6-7.8 13.5-4.6 1.3-.4-4.2z" fill="none" stroke="#1890ff" stroke-width="1.6" stroke-linejoin="round"/><path d="M8 3.6l4.6 2.6" stroke="#1890ff" stroke-width="1.6"/><path d="M9 20.5h10" stroke="#1890ff" stroke-width="1.6"/></svg>详情</div>
<div class="a td" style="left:436px;top:1498.5px;width:640px">331bc281-7b9a-11ec-a290-acde48001122</div>
<div class="a td" style="left:1078px;top:1498.5px;width:232.5px;letter-spacing:0"><span style="letter-spacing:-1px">OA</span> 请假</div>
<div class="a td" style="left:1310.5px;top:1498.5px;width:232.5px;letter-spacing:-2px;text-indent:2px">OA</div>
<div class="a td" style="left:2240.5px;top:1498.5px;width:360.0px"><span class="dt">2022-0<b class="o">1</b>-22 23:44:35</span></div>
<div class="a td" style="left:2600.5px;top:1498.5px;width:360.0px"><span class="dt">2022-0<b class="o">1</b>-22 23:44:42</span></div>
<div class="a stag ok" style="left:1833.8px;top:1488.0px;width:116px">已完成</div>
<div class="a stag ok" style="left:2078.2px;top:1488.0px;width:92px">通过</div>
<div class="a link" style="left:2960.5px;top:1496.0px;width:233.5px;text-align:center"><svg width="20" height="22" viewBox="0 0 20 22" style="display:inline-block;vertical-align:-3px;margin-right:4px"><path d="M9.3 1.2l4.6 2.6-7.8 13.5-4.6 1.3-.4-4.2z" fill="none" stroke="#1890ff" stroke-width="1.6" stroke-linejoin="round"/><path d="M8 3.6l4.6 2.6" stroke="#1890ff" stroke-width="1.6"/><path d="M9 20.5h10" stroke="#1890ff" stroke-width="1.6"/></svg>详情</div>
<div class="a td" style="left:436px;top:1596.5px;width:640px">03c6c157-7b9a-11ec-a290-acde48001122</div>
<div class="a td" style="left:1078px;top:1596.5px;width:232.5px;letter-spacing:0"><span style="letter-spacing:-1px">OA</span> 请假</div>
<div class="a td" style="left:1310.5px;top:1596.5px;width:232.5px;letter-spacing:-2px;text-indent:2px">OA</div>
<div class="a td" style="left:2240.5px;top:1596.5px;width:360.0px"><span class="dt">2022-0<b class="o">1</b>-22 23:43:<b class="o">1</b>6</span></div>
<div class="a stag ok" style="left:1833.8px;top:1586.0px;width:116px">已完成</div>
<div class="a stag dan" style="left:2066.2px;top:1586.0px;width:116px">不通过</div>
<div class="a link" style="left:2960.5px;top:1594.0px;width:233.5px;text-align:center"><svg width="20" height="22" viewBox="0 0 20 22" style="display:inline-block;vertical-align:-3px;margin-right:4px"><path d="M9.3 1.2l4.6 2.6-7.8 13.5-4.6 1.3-.4-4.2z" fill="none" stroke="#1890ff" stroke-width="1.6" stroke-linejoin="round"/><path d="M8 3.6l4.6 2.6" stroke="#1890ff" stroke-width="1.6"/><path d="M9 20.5h10" stroke="#1890ff" stroke-width="1.6"/></svg>详情</div>

<!-- ============ PAGINATION ============ -->
<div class="a" style="left:1777px;top:1726px;font-size:26px;line-height:40px;color:#606266">共 104 条</div>
<div class="a" style="left:1918px;top:1718px;width:200px;height:56px;border:2px solid #dcdfe6;border-radius:6px"></div>
<div class="a" style="left:1956px;top:1726px;font-size:26px;line-height:40px;color:#606266">10条/页</div>
<svg class="a" style="left:2084px;top:1741px" width="18" height="12" viewBox="0 0 18 12"><path d="M1 1.5l8 8 8-8" fill="none" stroke="#c0c4cc" stroke-width="1.8"/></svg>
<div class="a pg" style="left:2158px"></div>
<svg class="a" style="left:2181px;top:1736px" width="12" height="19" viewBox="0 0 12 19"><path d="M10.5 1.5l-8 8 8 8" fill="none" stroke="#c0c4cc" stroke-width="2.4"/></svg>
<div class="a pg" style="left:2238px;background:#1890ff;color:#fff">1</div>
<div class="a pg" style="left:2318px">2</div>
<div class="a pg" style="left:2398px">3</div>
<div class="a pg" style="left:2478px">4</div>
<div class="a pg" style="left:2558px">5</div>
<div class="a pg" style="left:2638px">6</div>
<div class="a pg" style="left:2718px"><svg style="position:absolute;left:17px;top:24px" width="26" height="8" viewBox="0 0 26 8"><circle cx="4" cy="4" r="3" fill="#606266"/><circle cx="13" cy="4" r="3" fill="#606266"/><circle cx="22" cy="4" r="3" fill="#606266"/></svg></div>
<div class="a pg" style="left:2798px">11</div>
<div class="a pg" style="left:2878px"></div>
<svg class="a" style="left:2901px;top:1736px" width="14" height="19" viewBox="0 0 14 19"><path d="M2.5 1.5l8 8-8 8" fill="none" stroke="#303133" stroke-width="2.4"/></svg>
<div class="a" style="left:2997px;top:1726px;font-size:26px;line-height:40px;color:#606266">前往</div>
<div class="a" style="left:3056px;top:1718px;width:92px;height:56px;border:2px solid #dcdfe6;border-radius:6px;font-size:26px;line-height:52px;text-align:center;color:#606266">1</div>
<div class="a" style="left:3157px;top:1726px;font-size:26px;line-height:40px;color:#606266">页</div>

<!-- right window edge -->
<div class="a" style="left:3180px;top:68px;width:51px;height:1894px;background:linear-gradient(to right,rgba(0,0,0,0),rgba(0,0,0,.045))"></div>
<div class="a" style="left:3231px;top:0;width:2px;height:1962px;background:#0c0c0d"></div>
<div class="a" style="left:3233px;top:0;width:3px;height:1962px;background:#5a5b5e"></div>

<svg class="a" style="left:3223px;top:1953px" width="13" height="9" viewBox="0 0 13 9"><path d="M10 0v2a7 7 0 0 1-7 7H13V0z" fill="#5a5b5e"/><path d="M9 0v2a7 7 0 0 1-7 7" fill="none" stroke="#0c0c0d" stroke-width="2"/></svg>
</body></html>
